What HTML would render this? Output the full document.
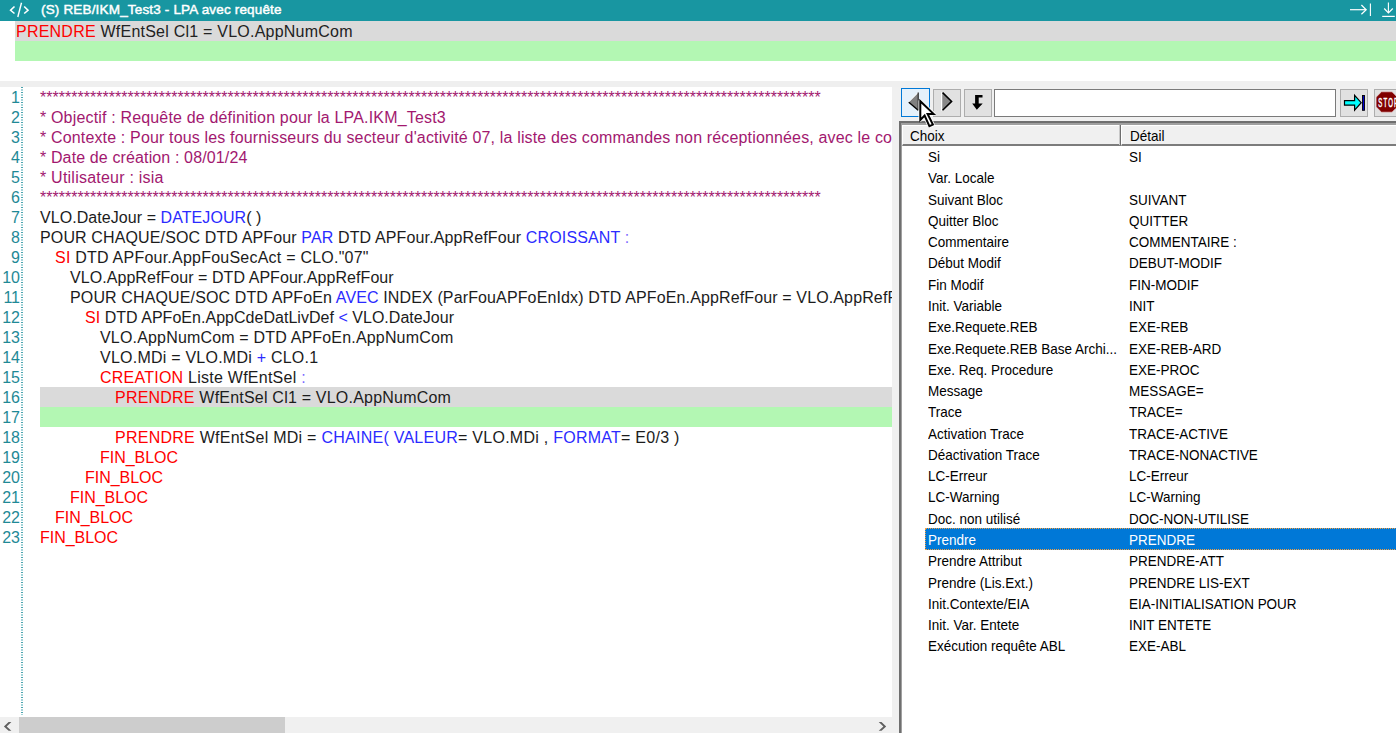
<!DOCTYPE html>
<html><head><meta charset="utf-8">
<style>
*{margin:0;padding:0;box-sizing:border-box}
html,body{width:1396px;height:733px;overflow:hidden;background:#fff;font-family:"Liberation Sans",sans-serif}
.abs{position:absolute}
#title{left:0;top:0;width:1396px;height:21px;background:#1896a1;color:#fff}
#title .t{left:41px;top:2px;font-size:13.5px;font-weight:normal;-webkit-text-stroke:0.45px #fff;white-space:nowrap;letter-spacing:0.17px}
#hdr{left:0;top:21px;width:1396px;height:60px;background:#fff}
#hgray{left:15px;top:21px;width:1381px;height:20px;background:#dadada}
#hgreen{left:15px;top:41px;width:1381px;height:20px;background:#b3f7b3}
#hline{left:16px;top:22px;height:20px;line-height:20px;font-size:16px;white-space:nowrap;color:#222;letter-spacing:0.226px}
#strip{left:0;top:81px;width:1396px;height:6px;background:#efefef}
#editor{left:0;top:87px;width:892px;height:630px;background:#fff;overflow:hidden}
.ln{position:absolute;left:0;width:20px;padding-top:1px;text-align:right;font-size:16px;color:#1f8996;height:20px;line-height:20px}
.cl{position:absolute;left:40px;padding-top:1px;height:20px;line-height:20px;font-size:16px;white-space:pre;color:#1c1c1c}
.r{color:#f00}.b{color:#2b2bff}.c{color:#a2186f}.lb{color:#7b6bff}
#dots{left:21px;top:0;width:2px;height:628px;background:repeating-linear-gradient(#4aa3ae 0 1.2px,#fff 1.2px 2.5px,#a6d5da 2.5px 3.7px,#fff 3.7px 5px)}
#hscroll{left:0;top:717px;width:892px;height:16px;background:#f0f0f0}
#thumb{left:19px;top:717px;width:266px;height:16px;background:#cdcdcd}
#panel{left:892px;top:87px;width:504px;height:646px;background:#f0f0f0}
.btn{position:absolute;top:89px;width:28px;height:28px;background:#e1e1e1;border:1px solid #adadad}
#tb{left:994px;top:89px;width:342px;height:28px;background:#fff;border:1px solid #7a7a7a}
#lv{left:899px;top:121px;width:497px;height:612px;background:#fff;border-left:2px solid #6f6f6f;border-top:2px solid #6f6f6f}
#lvi{position:absolute;left:0;top:0;width:495px;height:610px;border-left:1px solid #a0a0a0;border-top:2px solid #a0a0a0}
.hc{position:absolute;top:0;height:21px;background:#f0f0f0;border-top:1px solid #fff;border-left:1px solid #fff;border-bottom:2px solid #7c7c7c;font-size:14.5px;line-height:20px;padding-left:7px;color:#000;z-index:2}
.hc span{display:inline-block;transform:scaleX(0.93);transform-origin:0 0}
.hc .sep{position:absolute;right:0;top:-1px;width:2px;height:20px;border-left:1px solid #c8c8c8;background:#6d6d6d}
.row{position:absolute;left:0;width:494px;height:21.8px;font-size:14.5px;color:#000;white-space:nowrap}
.row span{position:absolute;top:4px;transform:scaleX(0.93);transform-origin:0 0}
.row .a{left:26px}.row .d{left:227px}
.sel{background:#0078d7;color:#fff;left:23px;width:600px;outline:1px dotted #f5a040;outline-offset:-1px}
.sel .a{left:3px}.sel .d{left:204px}
</style></head><body>
<div id="title" class="abs">
  <svg class="abs" style="left:0;top:0" width="40" height="21" viewBox="0 0 40 21">
    <path d="M14.5 6.5 L10.6 10.3 L14.5 13.5" stroke="#fff" stroke-width="1.6" fill="none"/>
    <path d="M21.5 2.8 L17.8 17" stroke="#fff" stroke-width="1.4" fill="none"/>
    <path d="M24.2 6.5 L28 10.3 L24.2 13.5" stroke="#fff" stroke-width="1.6" fill="none"/>
  </svg>
  <div class="abs t">(S) REB/IKM_Test3 - LPA avec requête</div>
  <svg class="abs" style="left:1340px;top:0" width="56" height="21" viewBox="1340 0 56 21">
    <path d="M1350 9.7 H1366" stroke="#fff" stroke-width="1.2" fill="none"/>
    <path d="M1361.4 5 L1366.2 9.7 L1361.4 14.3" stroke="#fff" stroke-width="1.2" fill="none"/>
    <path d="M1370.4 3.5 V16" stroke="#fff" stroke-width="1.1" fill="none"/>
    <path d="M1388.4 2.4 V12.6" stroke="#fff" stroke-width="1.1" fill="none"/>
    <path d="M1384.2 8.5 L1388.4 12.9 L1392.8 8.5" stroke="#fff" stroke-width="1.2" fill="none"/>
    <path d="M1382.2 16.4 H1394.8" stroke="#fff" stroke-width="1.2" fill="none"/>
  </svg>
</div>
<div id="hgray" class="abs"></div>
<div id="hgreen" class="abs"></div>
<div id="hline" class="abs"><span class="r">PRENDRE</span> WfEntSel Cl1 = VLO.AppNumCom</div>
<div id="strip" class="abs"></div>

<div id="editor" class="abs">
<div id="dots" class="abs"></div>
<div class="abs" style="left:40px;top:300px;width:852px;height:20px;background:#dadada"></div>
<div class="abs" style="left:40px;top:320px;width:852px;height:20px;background:#b3f7b3"></div>
<div class="ln" style="top:0px">1</div>
<div class="cl" id="L1" style="top:0px;left:40px;letter-spacing:0.020px"><span class="c">*****************************************************************************************************************************</span></div>
<div class="ln" style="top:20px">2</div>
<div class="cl" id="L2" style="top:20px;left:40px;letter-spacing:0.169px"><span class="c">* Objectif : Requête de définition pour la LPA.IKM_Test3</span></div>
<div class="ln" style="top:40px">3</div>
<div class="cl" id="L3" style="top:40px;left:40px;letter-spacing:0.156px"><span class="c">* Contexte : Pour tous les fournisseurs du secteur d'activité 07, la liste des commandes non réceptionnées, avec le compte</span></div>
<div class="ln" style="top:60px">4</div>
<div class="cl" id="L4" style="top:60px;left:40px;letter-spacing:0.129px"><span class="c">* Date de création : 08/01/24</span></div>
<div class="ln" style="top:80px">5</div>
<div class="cl" id="L5" style="top:80px;left:40px;letter-spacing:0.226px"><span class="c">* Utilisateur : isia</span></div>
<div class="ln" style="top:100px">6</div>
<div class="cl" id="L6" style="top:100px;left:40px;letter-spacing:0.020px"><span class="c">*****************************************************************************************************************************</span></div>
<div class="ln" style="top:120px">7</div>
<div class="cl" id="L7" style="top:120px;left:40px;letter-spacing:0.064px">VLO.DateJour = <span class="b">DATEJOUR</span>( )</div>
<div class="ln" style="top:140px">8</div>
<div class="cl" id="L8" style="top:140px;left:40px;letter-spacing:0.130px">POUR CHAQUE/SOC DTD APFour <span class="b">PAR</span> DTD APFour.AppRefFour <span class="b">CROISSANT</span><span class="lb"> :</span></div>
<div class="ln" style="top:160px">9</div>
<div class="cl" id="L9" style="top:160px;left:55px;letter-spacing:0.228px"><span class="r">SI</span> DTD APFour.AppFouSecAct = CLO."07"</div>
<div class="ln" style="top:180px">10</div>
<div class="cl" id="L10" style="top:180px;left:70px;letter-spacing:0.059px">VLO.AppRefFour = DTD APFour.AppRefFour</div>
<div class="ln" style="top:200px">11</div>
<div class="cl" id="L11" style="top:200px;left:70px;letter-spacing:0.130px">POUR CHAQUE/SOC DTD APFoEn <span class="b">AVEC</span> INDEX (ParFouAPFoEnIdx) DTD APFoEn.AppRefFour = VLO.AppRefFour</div>
<div class="ln" style="top:220px">12</div>
<div class="cl" id="L12" style="top:220px;left:85px;letter-spacing:0.028px"><span class="r">SI</span> DTD APFoEn.AppCdeDatLivDef <span class="b">&lt;</span> VLO.DateJour</div>
<div class="ln" style="top:240px">13</div>
<div class="cl" id="L13" style="top:240px;left:100px;letter-spacing:0.174px">VLO.AppNumCom = DTD APFoEn.AppNumCom</div>
<div class="ln" style="top:260px">14</div>
<div class="cl" id="L14" style="top:260px;left:100px;letter-spacing:0.233px">VLO.MDi = VLO.MDi <span class="b">+</span> CLO.1</div>
<div class="ln" style="top:280px">15</div>
<div class="cl" id="L15" style="top:280px;left:100px;letter-spacing:0.242px"><span class="r">CREATION</span> Liste WfEntSel <span class="lb">:</span></div>
<div class="ln" style="top:300px">16</div>
<div class="cl" id="L16" style="top:300px;left:115px;letter-spacing:0.209px"><span class="r">PRENDRE</span> WfEntSel Cl1 = VLO.AppNumCom</div>
<div class="ln" style="top:320px">17</div>
<div class="cl" id="L17" style="top:320px;left:40px;letter-spacing:0.000px"></div>
<div class="ln" style="top:340px">18</div>
<div class="cl" id="L18" style="top:340px;left:115px;letter-spacing:0.256px"><span class="r">PRENDRE</span> WfEntSel MDi = <span class="b">CHAINE(</span> <span class="b">VALEUR</span>= VLO.MDi , <span class="b">FORMAT</span>= E0/3 )</div>
<div class="ln" style="top:360px">19</div>
<div class="cl" id="L19" style="top:360px;left:100px;letter-spacing:-0.043px"><span class="r">FIN_BLOC</span></div>
<div class="ln" style="top:380px">20</div>
<div class="cl" id="L20" style="top:380px;left:85px;letter-spacing:-0.043px"><span class="r">FIN_BLOC</span></div>
<div class="ln" style="top:400px">21</div>
<div class="cl" id="L21" style="top:400px;left:70px;letter-spacing:-0.043px"><span class="r">FIN_BLOC</span></div>
<div class="ln" style="top:420px">22</div>
<div class="cl" id="L22" style="top:420px;left:55px;letter-spacing:-0.043px"><span class="r">FIN_BLOC</span></div>
<div class="ln" style="top:440px">23</div>
<div class="cl" id="L23" style="top:440px;left:40px;letter-spacing:-0.043px"><span class="r">FIN_BLOC</span></div>
</div>
<div id="hscroll" class="abs"></div>
<div id="thumb" class="abs"></div>
<svg class="abs" style="left:0;top:717px" width="892" height="16" viewBox="0 717 892 16">
  <path d="M11.4 722 H8.6 L3.9 726.4 L8.6 730.8 H11.4 L6.7 726.4 Z" fill="#606060"/>
  <path d="M878.7 722 H881.5 L886.2 726.4 L881.5 730.8 H878.7 L883.4 726.4 Z" fill="#606060"/>
</svg>

<div id="panel" class="abs"></div>
<div class="btn" style="left:901px;top:88px;width:29px;height:29px;background:#e5f1fb;border-color:#0078d7"></div>
<div class="btn" style="left:933px"></div>
<div class="btn" style="left:964px"></div>
<div id="tb" class="abs"></div>
<div class="btn" style="left:1340px"></div>
<div class="btn" style="left:1374px;width:30px"></div>
<svg class="abs" style="left:892px;top:84px;z-index:5" width="504" height="50" viewBox="892 84 504 50">
  <!-- left triangle -->
  <path d="M918.6 92.2 L908.4 102.3 L918.6 110.5 Z" fill="#808080"/>
  <path d="M908.4 102.3 L918.2 92.4" stroke="#fff" stroke-width="1" fill="none"/>
  <path d="M908.8 102.3 L918.2 110.2" stroke="#000" stroke-width="1.4" fill="none"/>
  <path d="M918.2 92.6 V110.3" stroke="#333" stroke-width="1.2" fill="none"/>
  <!-- right triangle -->
  <path d="M942.3 92.2 L952.4 101.4 L942.3 110.7 Z" fill="#888"/>
  <path d="M941.5 92.2 V110.7" stroke="#fff" stroke-width="1" fill="none"/>
  <path d="M942.6 92.6 L951.6 101.4 L942.6 110.3" stroke="#000" stroke-width="1.5" fill="none" stroke-linejoin="miter"/>
  <!-- down arrow -->
  <path d="M975.1 94.9 H982.5 V97.6 H978.7 V103.5 H982.7 L976.8 109.8 L972.2 103.5 H975.1 Z" fill="#000"/>
  <!-- cyan arrow -->
  <path d="M1344.5 100.7 H1354.6 V95.4 L1361.2 102.7 L1354.6 110.1 V105.2 H1344.5 Z" fill="#00ffff" stroke="#000" stroke-width="1.2" stroke-linejoin="miter"/>
  <rect x="1362.5" y="95.5" width="2" height="14.8" fill="#0000d0" stroke="#000" stroke-width="0.9"/>
  <!-- stop -->
  <path d="M1381.5 91.8 H1392 L1397 96.8 V107.2 L1392 112.2 H1381.5 L1376.1 106.8 V97.2 Z" fill="#800000" stroke="#f4dada" stroke-width="0.6"/>
  <text x="0" y="107.2" font-family="Liberation Sans" font-size="12" fill="#fff" stroke="#fff" stroke-width="0.5" letter-spacing="2.3" transform="translate(1378.3 0) scale(0.5 1)">STOP</text>
  <!-- cursor -->
  <path d="M920.3 101.2 V120 L924.6 115.6 L929.4 126.2 L932.9 124.6 L927.6 113.9 H933.6 Z" fill="none" stroke="#fff" stroke-width="3.6" stroke-linejoin="round"/>
  <path d="M920.3 101.2 V120 L924.6 115.6 L929.4 126.2 L932.9 124.6 L927.6 113.9 H933.6 Z" fill="#fff" stroke="#000" stroke-width="2" stroke-linejoin="miter"/>
</svg>

<div id="lv" class="abs"><div id="lvi">
<div class="hc" style="left:0;width:219px"><span>Choix</span><div class="sep"></div></div>
<div class="hc" style="left:219px;width:300px;padding-left:8px"><span>Détail</span></div>
<div class="row" style="top:20.10px"><span class="a">Si</span><span class="d">SI</span></div>
<div class="row" style="top:41.37px"><span class="a">Var. Locale</span><span class="d"></span></div>
<div class="row" style="top:62.64px"><span class="a">Suivant Bloc</span><span class="d">SUIVANT</span></div>
<div class="row" style="top:83.91px"><span class="a">Quitter Bloc</span><span class="d">QUITTER</span></div>
<div class="row" style="top:105.18px"><span class="a">Commentaire</span><span class="d">COMMENTAIRE :</span></div>
<div class="row" style="top:126.45px"><span class="a">Début Modif</span><span class="d">DEBUT-MODIF</span></div>
<div class="row" style="top:147.72px"><span class="a">Fin Modif</span><span class="d">FIN-MODIF</span></div>
<div class="row" style="top:168.99px"><span class="a">Init. Variable</span><span class="d">INIT</span></div>
<div class="row" style="top:190.26px"><span class="a">Exe.Requete.REB</span><span class="d">EXE-REB</span></div>
<div class="row" style="top:211.53px"><span class="a">Exe.Requete.REB Base Archi...</span><span class="d">EXE-REB-ARD</span></div>
<div class="row" style="top:232.80px"><span class="a">Exe. Req. Procedure</span><span class="d">EXE-PROC</span></div>
<div class="row" style="top:254.07px"><span class="a">Message</span><span class="d">MESSAGE=</span></div>
<div class="row" style="top:275.34px"><span class="a">Trace</span><span class="d">TRACE=</span></div>
<div class="row" style="top:296.61px"><span class="a">Activation Trace</span><span class="d">TRACE-ACTIVE</span></div>
<div class="row" style="top:317.88px"><span class="a">Déactivation Trace</span><span class="d">TRACE-NONACTIVE</span></div>
<div class="row" style="top:339.15px"><span class="a">LC-Erreur</span><span class="d">LC-Erreur</span></div>
<div class="row" style="top:360.42px"><span class="a">LC-Warning</span><span class="d">LC-Warning</span></div>
<div class="row" style="top:381.69px"><span class="a">Doc. non utilisé</span><span class="d">DOC-NON-UTILISE</span></div>
<div class="row sel" style="top:402.96px"><span class="a">Prendre</span><span class="d">PRENDRE</span></div>
<div class="row" style="top:424.23px"><span class="a">Prendre Attribut</span><span class="d">PRENDRE-ATT</span></div>
<div class="row" style="top:445.50px"><span class="a">Prendre (Lis.Ext.)</span><span class="d">PRENDRE LIS-EXT</span></div>
<div class="row" style="top:466.77px"><span class="a">Init.Contexte/EIA</span><span class="d">EIA-INITIALISATION POUR</span></div>
<div class="row" style="top:488.04px"><span class="a">Init. Var. Entete</span><span class="d">INIT ENTETE</span></div>
<div class="row" style="top:509.31px"><span class="a">Exécution requête ABL</span><span class="d">EXE-ABL</span></div>
</div></div>
</body></html>
